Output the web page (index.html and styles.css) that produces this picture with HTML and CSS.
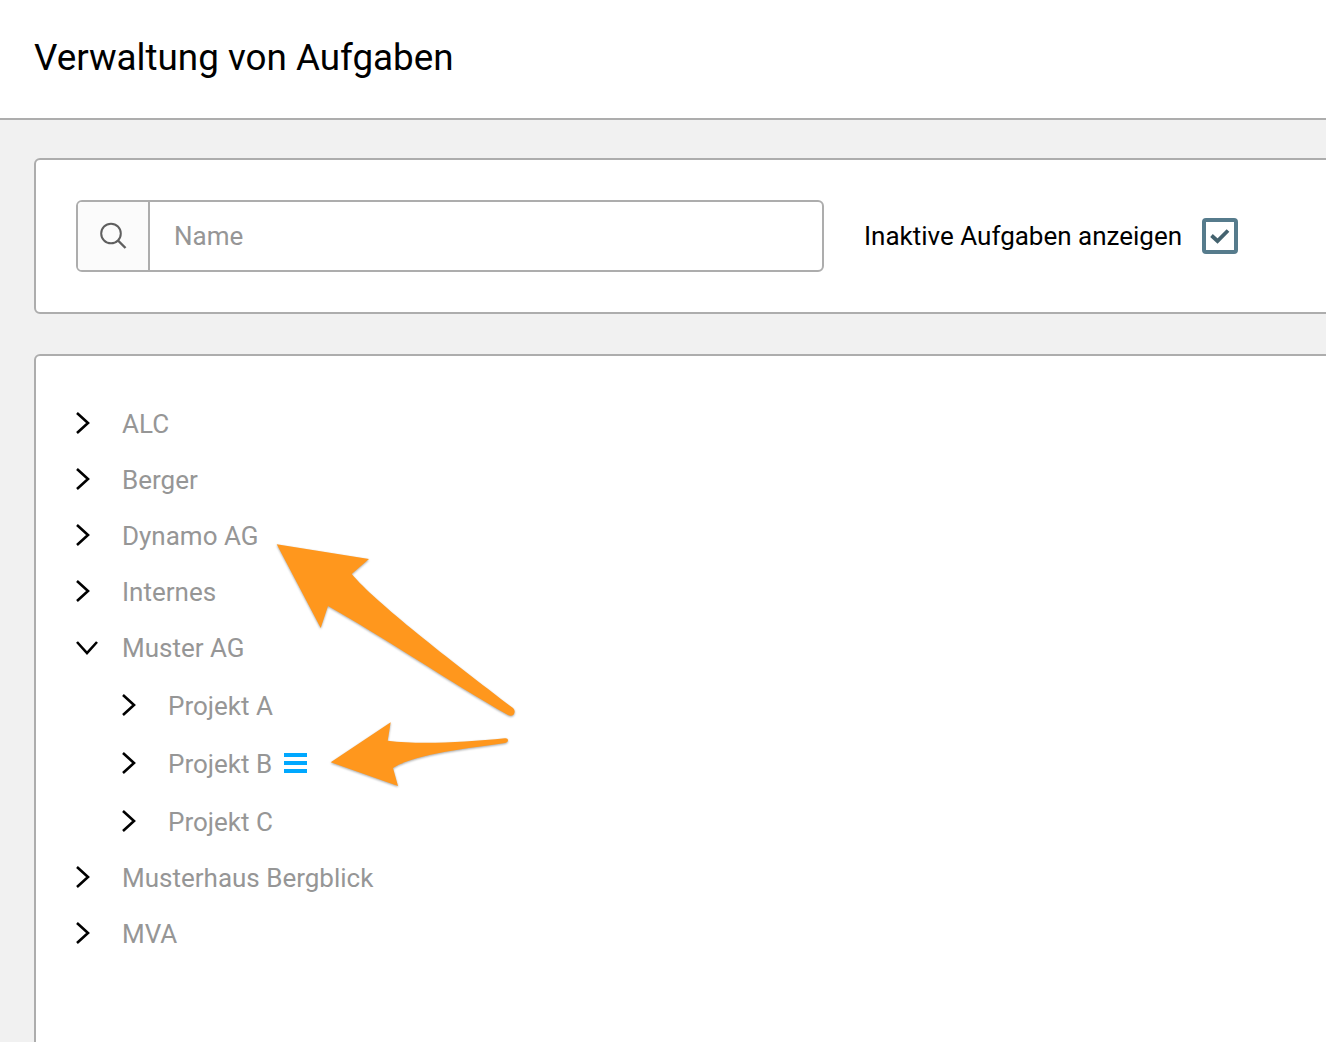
FILE: index.html
```html
<!DOCTYPE html>
<html lang="de">
<head>
<meta charset="utf-8">
<title>Verwaltung von Aufgaben</title>
<link rel="stylesheet" href="styles.css">
</head>
<body>
<header class="topbar"><h1 class="title">Verwaltung von Aufgaben</h1></header>
<main class="content">
  <section class="card filter">
    <div class="search">
      <span class="search-icon">
        <svg width="28" height="28" viewBox="0 0 28 28" fill="none" stroke="#5f5f5f" stroke-width="2"><circle cx="12" cy="11.5" r="9.8"/><path stroke-width="2.4" d="M19 18.5 L26.5 26"/></svg>
      </span>
      <span class="search-input">Name</span>
    </div>
    <span class="check-label">Inaktive Aufgaben anzeigen</span>
    <span class="checkbox">
      <svg width="20" height="16" viewBox="0 0 20 16" fill="none" stroke="#44636f" stroke-width="3.8"><path d="M1.5 7.5 L7.5 13 L18 2.5"/></svg>
    </span>
  </section>
  <section class="card tree">
    <div class="row"><svg class="chev" viewBox="0 0 16 24"><path d="M2 2 L13 12 L2 22"/></svg><span class="label">ALC</span></div>
    <div class="row"><svg class="chev" viewBox="0 0 16 24"><path d="M2 2 L13 12 L2 22"/></svg><span class="label">Berger</span></div>
    <div class="row"><svg class="chev" viewBox="0 0 16 24"><path d="M2 2 L13 12 L2 22"/></svg><span class="label">Dynamo AG</span></div>
    <div class="row"><svg class="chev" viewBox="0 0 16 24"><path d="M2 2 L13 12 L2 22"/></svg><span class="label">Internes</span></div>
    <div class="row"><svg class="chev-down" viewBox="0 0 24 16"><path d="M2 2 L12 13 L22 2"/></svg><span class="label">Muster AG</span></div>
    <div class="row sub"><svg class="chev" viewBox="0 0 16 24"><path d="M2 2 L13 12 L2 22"/></svg><span class="label">Projekt A</span></div>
    <div class="row sub"><svg class="chev" viewBox="0 0 16 24"><path d="M2 2 L13 12 L2 22"/></svg><span class="label">Projekt B</span><span class="menu"><i></i><i></i><i></i></span></div>
    <div class="row sub"><svg class="chev" viewBox="0 0 16 24"><path d="M2 2 L13 12 L2 22"/></svg><span class="label">Projekt C</span></div>
    <div class="row"><svg class="chev" viewBox="0 0 16 24"><path d="M2 2 L13 12 L2 22"/></svg><span class="label">Musterhaus Bergblick</span></div>
    <div class="row"><svg class="chev" viewBox="0 0 16 24"><path d="M2 2 L13 12 L2 22"/></svg><span class="label">MVA</span></div>
  </section>
</main>
<svg class="arrows" width="1326" height="1042" viewBox="0 0 1326 1042">
  <path class="arrow" d="M276.7 544.3 L369 559 L351.7 574 C375 602 450 660 513 708 C517 712 513 718 508 715 C450 682 380 635 328 606 L320.7 628 Z"/>
  <path class="arrow" d="M330.7 762.3 L390.7 722.3 L387.7 740.7 C420 745 465 742 505 738.3 C509 738 509 742 505 743 C470 748 415 754 393 768 L398 786 Z"/>
</svg>
</body>
</html>
```
FILE: styles.css
```css
* { box-sizing: border-box; }
html, body { margin: 0; padding: 0; height: 100%; overflow: hidden; }
body {
  position: relative;
  background: #f1f1f1;
  font-family: Roboto, "Liberation Sans", sans-serif;
}
.topbar {
  height: 120px;
  background: #fff;
  border-bottom: 2px solid #adadad;
  padding: 0 34px;
  display: flex;
  align-items: center;
}
.title {
  margin: 0 0 4px;
  font-size: 36.8px;
  font-weight: 400;
  color: #000;
}
.content {
  height: 922px;
  overflow: hidden;
  padding: 38px 0 0 34px;
}
.card {
  width: 1306px;
  background: #fff;
  border: 2px solid #adadad;
  border-radius: 6px;
}
.filter {
  height: 156px;
  display: flex;
  align-items: center;
  padding-left: 40px;
  margin-bottom: 40px;
}
.search {
  width: 748px;
  height: 72px;
  display: flex;
  border: 2px solid #adadad;
  border-radius: 6px;
  margin-right: 40px;
}
.search-icon {
  width: 72px;
  flex: none;
  background: #fbfbfb;
  border-right: 2px solid #adadad;
  border-radius: 4px 0 0 4px;
  display: flex;
  align-items: center;
  justify-content: center;
}
.search-input {
  flex: 1;
  display: flex;
  align-items: center;
  padding-left: 24px;
  font-size: 26px;
  color: #969696;
}
.check-label { font-size: 26px; color: #000; }
.checkbox {
  width: 36px;
  height: 36px;
  margin-left: 20px;
  border: 4px solid #567b8c;
  border-radius: 4px;
  display: flex;
  align-items: center;
  justify-content: center;
}
.tree {
  height: 760px;
  padding: 40px 0 0 39px;
}
.row {
  height: 56px;
  display: flex;
  align-items: center;
  font-size: 26px;
  color: #969696;
}
.row.sub { height: 58px; padding-left: 46px; }
.row.sub .label { margin-top: 2px; }
.label { margin-left: 31px; }
.chev, .chev-down { fill: none; stroke: #000; stroke-width: 2.6; flex: none; }
.chev { width: 16px; height: 24px; margin-bottom: 2px; }
.row.sub .chev { margin-bottom: 0; }
.chev-down { width: 24px; height: 16px; margin-right: -8px; }
.menu {
  display: flex;
  flex-direction: column;
  gap: 4px;
  margin-left: 12px;
}
.menu i { display: block; width: 23px; height: 4px; background: #00a8ff; }
.arrows {
  position: absolute;
  left: 0;
  top: 0;
  pointer-events: none;
}
.arrow {
  fill: #ff971d;
  filter: drop-shadow(0 1px 1px rgba(0, 0, 0, 0.35));
}
```
